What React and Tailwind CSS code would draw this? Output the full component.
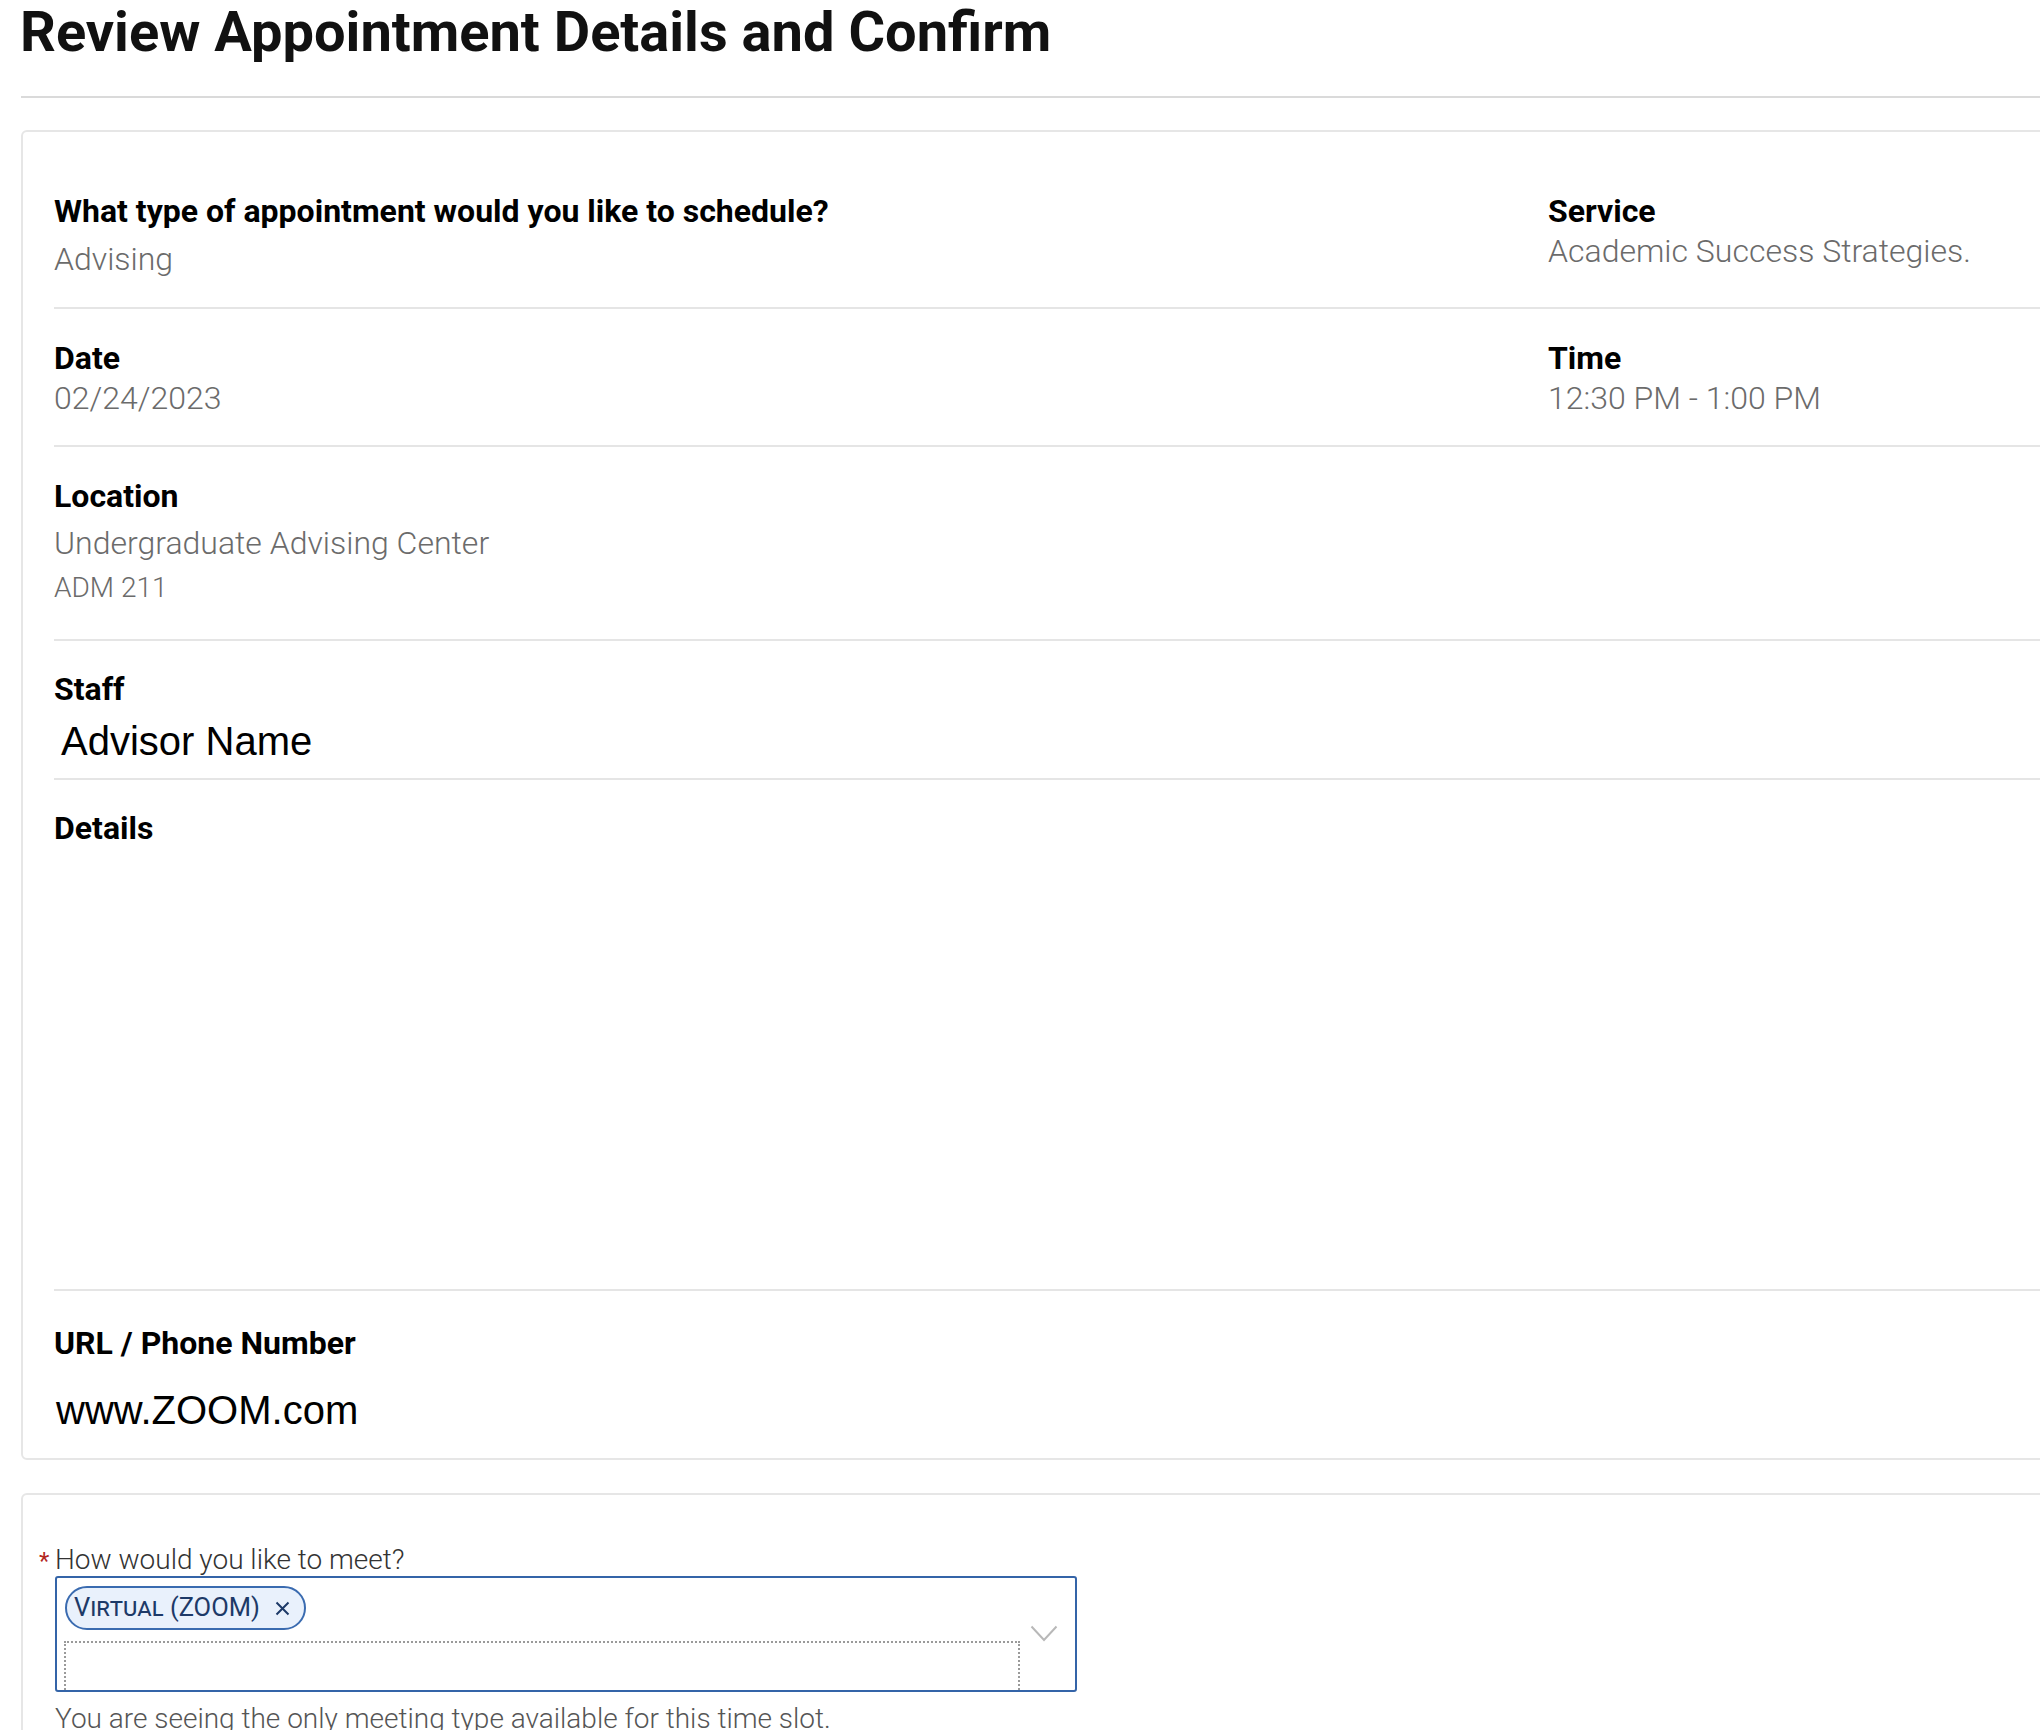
const Label = ({ children, className = "" }) => (
  <div className={`text-[32px] leading-[36px] font-bold text-black ${className}`}>{children}</div>
);

const Value = ({ children, className = "" }) => (
  <div className={`text-[32px] leading-[38px] font-light text-[#6b6b6b] ${className}`}>{children}</div>
);

const Plain = ({ children, className = "" }) => (
  <div className={`text-[40px] leading-[45px] text-black font-['Liberation_Sans',Arial,sans-serif] ${className}`}>
    {children}
  </div>
);

const App = () => {
  return (
    <div className="w-[2040px] h-[1730px] overflow-hidden bg-white font-['Roboto',sans-serif]">
      <div className="pl-[21px]">
        {/* Page title */}
        <h1 className="-ml-[1px] pt-[4px] text-[56px] leading-[56px] font-bold text-[#111]">
          Review Appointment Details and Confirm
        </h1>
        <div className="mt-[36px] w-[2060px] border-t-2 border-[#dadada]" />

        {/* Summary card */}
        <div className="mt-[32px] w-[2060px] rounded-[6px] border-2 border-[#e6e6e6] pl-[31px]">
          <div className="grid grid-cols-[1494px_1fr] items-start border-b-2 border-[#e5e5e5] pt-[61px] pb-[29px]">
            <div>
              <Label>What type of appointment would you like to schedule?</Label>
              <Value className="mt-[11px]">Advising</Value>
            </div>
            <div>
              <Label>Service</Label>
              <Value className="mt-[3px]">Academic Success Strategies.</Value>
            </div>
          </div>

          <div className="grid grid-cols-[1494px_1fr] items-start border-b-2 border-[#e5e5e5] pt-[31px] pb-[28px]">
            <div>
              <Label>Date</Label>
              <Value className="mt-[3px]">02/24/2023</Value>
            </div>
            <div>
              <Label>Time</Label>
              <Value className="mt-[3px]">12:30 PM - 1:00 PM</Value>
            </div>
          </div>

          <div className="border-b-2 border-[#e5e5e5] pt-[31px] pb-[35px]">
            <Label>Location</Label>
            <Value className="mt-[10px]">Undergraduate Advising Center</Value>
            <div className="mt-[10px] text-[28px] leading-[32px] font-light text-[#6b6b6b]">ADM 211</div>
          </div>

          <div className="border-b-2 border-[#e5e5e5] pt-[30px] pb-[14px]">
            <Label>Staff</Label>
            <Plain className="mt-[12px] pl-[7px]">Advisor Name</Plain>
          </div>

          <div className="border-b-2 border-[#e5e5e5] pt-[30px] pb-[443px]">
            <Label>Details</Label>
          </div>

          <div className="pt-[34px] pb-[25px]">
            <Label>URL / Phone Number</Label>
            <Plain className="mt-[27px] pl-[2px]">www.ZOOM.com</Plain>
          </div>
        </div>

        {/* Meeting type card */}
        <div className="mt-[33px] w-[2060px] h-[400px] rounded-[6px] border-2 border-[#e6e6e6] pl-[32px] pt-[48px]">
          <div className="flex items-start">
            <span className="-ml-[16px] w-[16px] pt-[6px] text-[24px] leading-[24px] text-[#b3261e]">*</span>
            <span className="text-[28px] leading-[33px] font-light text-[#333]">How would you like to meet?</span>
          </div>

          <div className="flex w-[1022px] h-[116px] rounded-[3px] border-2 border-[#3464a8] pl-[8px] pt-[8px]">
            <div className="w-[955px]">
              <div className="inline-flex h-[44px] items-center gap-[15px] rounded-full border-2 border-[#3a6bb0] bg-[#e9f1fc] pl-[7px] pr-[14px]">
                <span className="text-[25.5px] leading-none text-[#1d3a68] [font-variant-caps:small-caps]">Virtual (ZOOM)</span>
                <svg width="15" height="15" viewBox="0 0 15 15" className="text-[#1d3a68]">
                  <path d="M1.5 1.5 L13.5 13.5 M13.5 1.5 L1.5 13.5" stroke="currentColor" strokeWidth="2" fill="none" />
                </svg>
              </div>
              <div className="-ml-[1px] mt-[11px] h-[49px] border-2 border-dotted border-[#9a9a9a] border-b-0" />
            </div>
            <div className="ml-[10px] mt-[39px]">
              <svg width="28" height="17" viewBox="0 0 28 17">
                <polyline points="1.5,1.5 14,15 26.5,1.5" fill="none" stroke="#b8b8b8" strokeWidth="2" />
              </svg>
            </div>
          </div>

          <div className="mt-[10px] text-[28px] leading-[33px] font-light text-[#555]">
            You are seeing the only meeting type available for this time slot.
          </div>
        </div>
      </div>
    </div>
  );
};

export default App;
